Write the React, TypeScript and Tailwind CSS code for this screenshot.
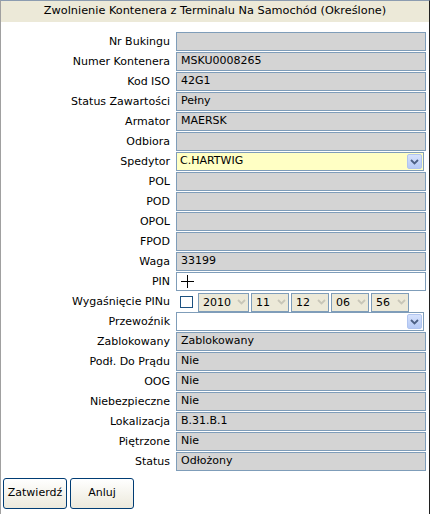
import React from 'react';

const font = { fontFamily: '"DejaVu Sans", Verdana, sans-serif' };

type Row = { label: string; value?: string; kind?: 'text' | 'yellow' | 'pin' | 'date' | 'select' };

const rows: Row[] = [
  { label: 'Nr Bukingu', value: '' },
  { label: 'Numer Kontenera', value: 'MSKU0008265' },
  { label: 'Kod ISO', value: '42G1' },
  { label: 'Status Zawartości', value: 'Pełny' },
  { label: 'Armator', value: 'MAERSK' },
  { label: 'Odbiora', value: '' },
  { label: 'Spedytor', value: 'C.HARTWIG', kind: 'yellow' },
  { label: 'POL', value: '' },
  { label: 'POD', value: '' },
  { label: 'OPOL', value: '' },
  { label: 'FPOD', value: '' },
  { label: 'Waga', value: '33199' },
  { label: 'PIN', kind: 'pin' },
  { label: 'Wygaśnięcie PINu', kind: 'date' },
  { label: 'Przewoźnik', kind: 'select' },
  { label: 'Zablokowany', value: 'Zablokowany' },
  { label: 'Podł. Do Prądu', value: 'Nie' },
  { label: 'OOG', value: 'Nie' },
  { label: 'Niebezpieczne', value: 'Nie' },
  { label: 'Lokalizacja', value: 'B.31.B.1' },
  { label: 'Piętrzone', value: 'Nie' },
  { label: 'Status', value: 'Odłożony' },
];

function Chevron({ color }: { color: string }) {
  return (
    <svg width="9" height="6" viewBox="0 0 9 6">
      <path d="M1 1 L4.5 4.5 L8 1" fill="none" stroke={color} strokeWidth="1.8" />
    </svg>
  );
}

function DropButton() {
  return (
    <div className="w-[15px] h-[15px] mr-[1px] rounded-[2px] border border-[#b1c5f0] bg-gradient-to-b from-[#d6e2fc] to-[#b6caf6] flex items-center justify-center">
      <Chevron color="#4d6185" />
    </div>
  );
}

function DateSelect({ value, w }: { value: string; w: string }) {
  return (
    <div className={`${w} h-[19px] border border-[#7f9db9] bg-[#ece9d8] flex items-center justify-between pl-[4px] pr-[2px]`}>
      <span className="text-[11px] leading-none">{value}</span>
      <Chevron color="#c8c6b8" />
    </div>
  );
}

function Field({ row }: { row: Row }) {
  if (row.kind === 'yellow') {
    return (
      <div className="w-[248px] h-[19px] border border-[#7f9db9] bg-[#ffffc4] flex items-center justify-between pl-[3px]">
        <span className="text-[11px]">{row.value}</span>
        <DropButton />
      </div>
    );
  }
  if (row.kind === 'select') {
    return (
      <div className="w-[248px] h-[19px] border border-[#7f9db9] bg-white flex items-center justify-end">
        <DropButton />
      </div>
    );
  }
  if (row.kind === 'pin') {
    return (
      <div className="w-[250px] h-[19px] border border-[#7f9db9] bg-white flex items-center pl-[4px]">
        <svg width="13" height="13" viewBox="0 0 13 13">
          <path d="M6.5 0 V13 M0 6.5 H13" stroke="#000" strokeWidth="1" />
        </svg>
      </div>
    );
  }
  if (row.kind === 'date') {
    return (
      <div className="flex items-center gap-[2px]">
        <div className="w-[13px] h-[12px] border border-[#1c5180] bg-white ml-[4px] mr-[3px]" />
        <DateSelect value="2010" w="w-[51px]" />
        <DateSelect value="11" w="w-[38px]" />
        <DateSelect value="12" w="w-[38px]" />
        <DateSelect value="06" w="w-[38px]" />
        <DateSelect value="56" w="w-[38px]" />
      </div>
    );
  }
  return (
    <div className="w-[250px] h-[19px] border border-[#7f9db9] bg-[#d4d4d4] flex items-center pl-[4px]">
      <span className="text-[11px]">{row.value}</span>
    </div>
  );
}

export default function App() {
  return (
    <div className="w-[432px] h-[514px] bg-white text-black" style={font}>
      <div className="w-[430px] h-[514px] border-l border-l-[#a0a0a0] border-r border-r-[#202020] border-t border-t-[#8c9cb0]">
        <div className="h-[21px] bg-[#ece9d8] flex items-center justify-center text-[11.3px]">
          Zwolnienie Kontenera z Terminalu Na Samochód (Określone)
        </div>
        <div className="pt-[10px]">
          {rows.map((row) => (
            <div key={row.label} className="flex h-[20px]">
              <div className="w-[175px] pr-[6px] text-right text-[11px] leading-[19px] whitespace-nowrap">
                {row.label}
              </div>
              <Field row={row} />
            </div>
          ))}
        </div>
        <div className="flex gap-[3px] pl-[2px] pt-[6px]">
          <button className="w-[64px] h-[31px] rounded-[3px] border border-[#003c74] bg-gradient-to-b from-white to-[#ece9dc] text-[11px]">
            Zatwierdź
          </button>
          <button className="w-[64px] h-[31px] rounded-[3px] border border-[#003c74] bg-gradient-to-b from-white to-[#ece9dc] text-[11px]">
            Anluj
          </button>
        </div>
      </div>
    </div>
  );
}
